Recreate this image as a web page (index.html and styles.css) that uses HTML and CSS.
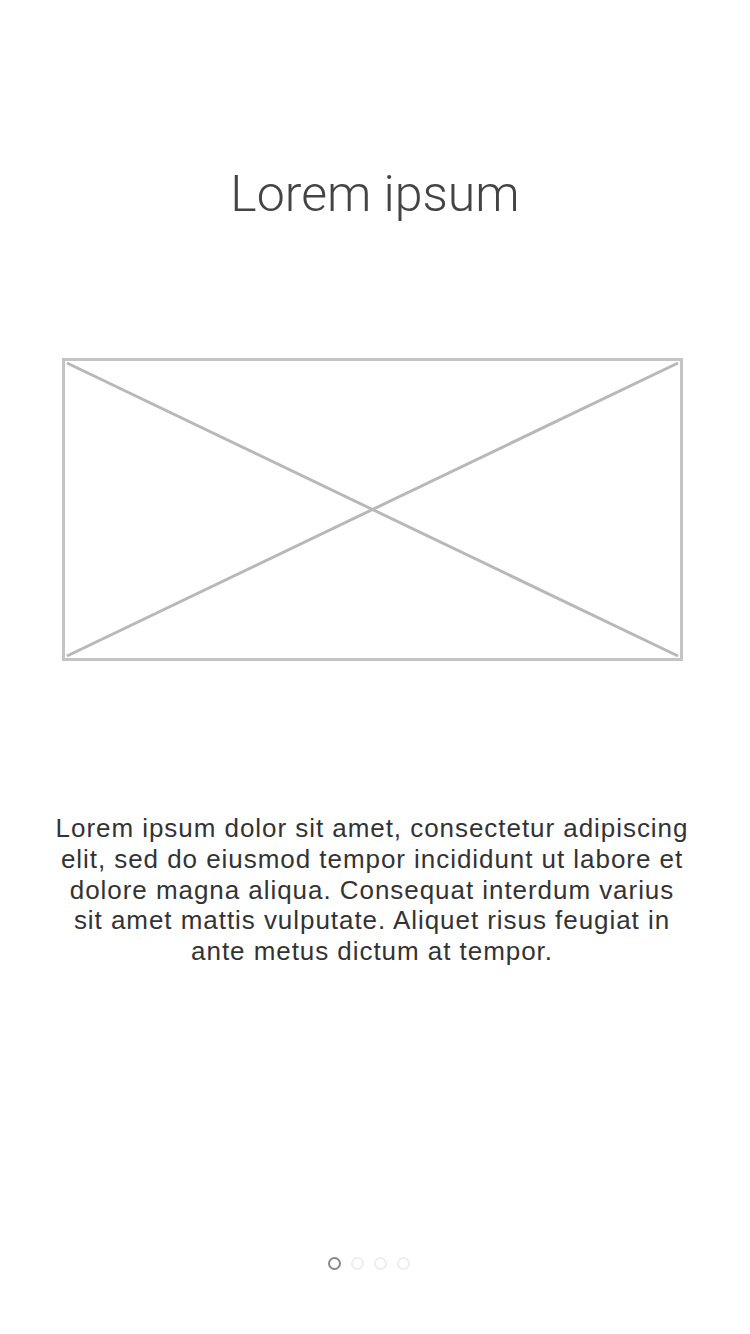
FILE: index.html
```html
<!DOCTYPE html>
<html>
<head>
<meta charset="utf-8">
<link rel="stylesheet" href="styles.css">
</head>
<body>
<div class="screen">
  <h1 class="title">Lorem ipsum</h1>
  <div class="placeholder">
    <svg class="ph-svg" viewBox="0 0 620 302" preserveAspectRatio="none">
      <line x1="2" y1="2" x2="618" y2="300" />
      <line x1="2" y1="300" x2="618" y2="2" />
    </svg>
  </div>
  <p class="desc">Lorem ipsum dolor sit amet, consectetur adipiscing elit, sed do eiusmod tempor incididunt ut labore et dolore magna aliqua. Consequat interdum varius sit amet mattis vulputate. Aliquet risus feugiat in ante metus dictum at tempor.</p>
  <div class="spacer"></div>
  <div class="dots">
    <span class="dot active"></span>
    <span class="dot"></span>
    <span class="dot"></span>
    <span class="dot"></span>
  </div>
</div>
</body>
</html>
```

FILE: styles.css
```css
html, body {
  margin: 0;
  padding: 0;
  background: #fff;
}
.screen {
  width: 750px;
  height: 1334px;
  display: flex;
  flex-direction: column;
  align-items: center;
  box-sizing: border-box;
  padding-top: 164px;
}
.title {
  margin: 0;
  font-family: Roboto, "Liberation Sans", sans-serif;
  font-weight: 300;
  font-size: 50px;
  line-height: 60px;
  color: #444;
}
.placeholder {
  margin-top: 134px;
  margin-right: 6px;
  width: 621px;
  height: 303px;
  box-sizing: border-box;
  border: 3px solid #c4c4c4;
  position: relative;
}
.ph-svg {
  position: absolute;
  inset: 0;
  width: 100%;
  height: 100%;
}
.ph-svg line {
  stroke: #b8b8b8;
  stroke-width: 3;
}
.desc {
  margin: 152px 0 0;
  width: 640px;
  margin-right: 6px;
  text-align: center;
  font-family: "Liberation Sans", Arial, sans-serif;
  font-size: 26px;
  letter-spacing: 0.95px;
  line-height: 30.8px;
  color: #333;
}
.spacer {
  flex: 1;
}
.dots {
  display: flex;
  gap: 10px;
  margin-bottom: 64px;
  margin-right: 12px;
}
.dot {
  width: 9px;
  height: 9px;
  border-radius: 50%;
  border: 2.5px solid #eee;
}
.dot.active {
  border-color: #888;
}
```
